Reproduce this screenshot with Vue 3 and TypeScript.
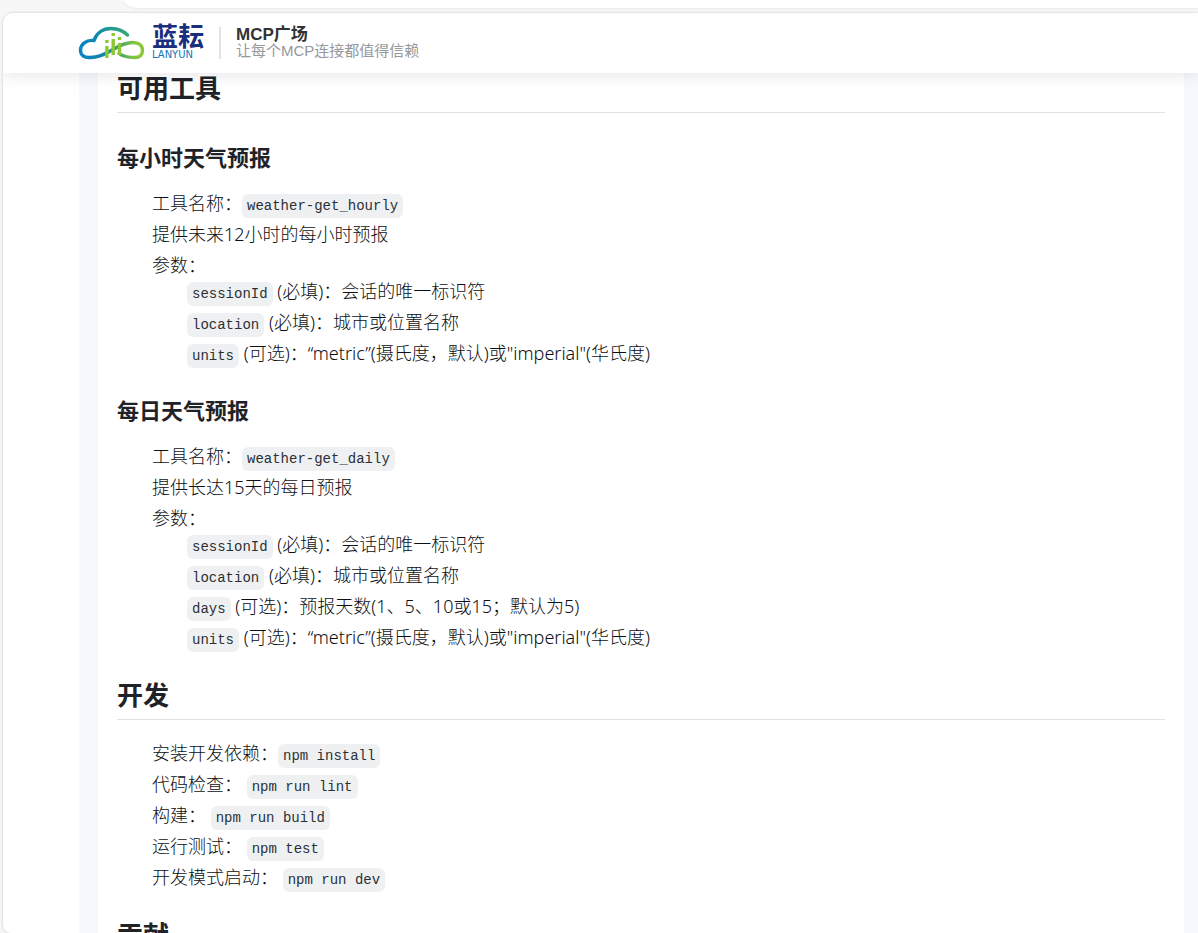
<script setup lang="ts">
interface Param {
  name: string
  text: string
}

interface Tool {
  title: string
  id: string
  summary: string
  params: Param[]
}

interface Command {
  label: string
  code: string
}

const sessionParam: Param = { name: 'sessionId', text: '(必填)：会话的唯一标识符' }
const locationParam: Param = { name: 'location', text: '(必填)：城市或位置名称' }
const unitsParam: Param = { name: 'units', text: '(可选)：“metric”(摄氏度，默认)或"imperial"(华氏度)' }

const tools: Tool[] = [
  {
    title: '每小时天气预报',
    id: 'weather-get_hourly',
    summary: '提供未来12小时的每小时预报',
    params: [sessionParam, locationParam, unitsParam],
  },
  {
    title: '每日天气预报',
    id: 'weather-get_daily',
    summary: '提供长达15天的每日预报',
    params: [
      sessionParam,
      locationParam,
      { name: 'days', text: '(可选)：预报天数(1、5、10或15；默认为5)' },
      unitsParam,
    ],
  },
]

const commands: Command[] = [
  { label: '安装开发依赖：', code: 'npm install' },
  { label: '代码检查：\u00a0', code: 'npm run lint' },
  { label: '构建：\u00a0', code: 'npm run build' },
  { label: '运行测试：\u00a0', code: 'npm test' },
  { label: '开发模式启动：\u00a0', code: 'npm run dev' },
]
</script>

<template>
  <div class="shell">
    <div class="toolbar"></div>
    <div class="window">
      <header class="header">
        <div class="brand">
          <svg class="cloud" viewBox="0 0 67 34" aria-hidden="true">
            <defs>
              <linearGradient id="cloudTop" gradientUnits="userSpaceOnUse" x1="2" y1="26" x2="50" y2="8">
                <stop offset="0" stop-color="#0785c6" />
                <stop offset="0.35" stop-color="#0a86b4" />
                <stop offset="1" stop-color="#35a878" />
              </linearGradient>
              <linearGradient id="cloudLoop" gradientUnits="userSpaceOnUse" x1="2" y1="0" x2="66" y2="0">
                <stop offset="0" stop-color="#0785c6" />
                <stop offset="0.35" stop-color="#0d87a8" />
                <stop offset="0.6" stop-color="#3fa570" />
                <stop offset="0.85" stop-color="#85c441" />
                <stop offset="1" stop-color="#8cc832" />
              </linearGradient>
            </defs>
            <path
              d="M49.500 9C45 4.500 39 2.500 33 2.500C25 2.500 18.500 7 16 14.500C8 13.500 2.500 18.500 2.500 24C2.500 29.500 6.500 31.500 11 31.500"
              fill="none" stroke="url(#cloudTop)" stroke-width="3.400" stroke-linecap="round"
            />
            <path
              d="M11 31.500C19 32 27 28.500 35 23.500C43 18.500 49 16.500 55 16.500C61 16.500 64.500 19.500 64.500 24.500C64.500 29 61.500 31.500 57 31.500C51 31.500 45 30.500 41 27.500"
              fill="none" stroke="url(#cloudLoop)" stroke-width="3.400" stroke-linecap="round"
            />
            <g fill="#8cc832">
              <path d="M27.200 14h3.400v3h-3.400zM27.200 20h3.400v12h-3.400zM33.500 7h3.400v3h-3.400zM33.500 13h3.400v16h-3.400zM39.800 11h3.400v3h-3.400zM39.800 17h3.400v12h-3.400z" />
            </g>
          </svg>
          <div class="wordmark">
            <span class="wordmark-cn">蓝耘</span>
            <span class="wordmark-en">LANYUN</span>
          </div>
        </div>
        <div class="tagline">
          <div class="tagline-title">MCP广场</div>
          <div class="tagline-sub">让每个MCP连接都值得信赖</div>
        </div>
      </header>

      <div class="page">
        <main class="doc">
          <h2>可用工具</h2>
          <section v-for="tool in tools" :key="tool.id">
            <h3>{{ tool.title }}</h3>
            <ul>
              <li>工具名称：<code>{{ tool.id }}</code></li>
              <li>{{ tool.summary }}</li>
              <li>
                参数：
                <ul>
                  <li v-for="param in tool.params" :key="param.name">
                    <code>{{ param.name }}</code> {{ param.text }}
                  </li>
                </ul>
              </li>
            </ul>
          </section>

          <h2>开发</h2>
          <ul>
            <li v-for="cmd in commands" :key="cmd.code">{{ cmd.label }}<code>{{ cmd.code }}</code></li>
          </ul>

          <h2>贡献</h2>
        </main>
      </div>
    </div>
  </div>
</template>

<style>
body {
  margin: 0;
  background: #f7f7f7;
}
</style>

<style scoped>
.shell {
  display: flex;
  flex-direction: column;
  height: 100vh;
  overflow: hidden;
  background: #f7f7f7;
  color: #1f2328;
  font-family: "Noto Sans", "Noto Sans CJK SC", sans-serif;
}

.toolbar {
  flex: none;
  height: 8px;
  margin: 0 0 5px 124px;
  background: #fff;
  border-bottom-left-radius: 16px 8px;
  box-shadow: 0 1px 2px rgba(0, 0, 0, 0.06);
}

.window {
  flex: 1;
  min-height: 0;
  display: flex;
  flex-direction: column;
  margin-left: 3px;
  overflow: hidden;
  background: #fff;
  border-radius: 10px 0 0 8px;
  box-shadow: 0 0 3px rgba(0, 0, 0, 0.2);
}

.header {
  position: relative;
  z-index: 1;
  flex: none;
  display: flex;
  align-items: center;
  height: 60px;
  padding-left: 75px;
  background: #fff;
  box-shadow: 0 2px 16px rgba(0, 0, 0, 0.1);
}

.brand {
  display: flex;
  align-items: center;
  gap: 7px;
  padding-right: 14px;
}

.cloud {
  width: 67px;
  height: 34px;
}

.wordmark {
  display: flex;
  flex-direction: column;
  width: 53px;
}

.wordmark-cn {
  color: #1b2e7d;
  font-size: 26px;
  font-weight: 700;
  line-height: 24px;
  white-space: nowrap;
}

.wordmark-en {
  color: #1676b8;
  font-family: "DejaVu Sans", sans-serif;
  font-size: 10px;
  line-height: 14px;
}

.tagline {
  padding-left: 15px;
  border-left: 2px solid #e2e3e9;
  font-family: "Liberation Sans", "Noto Sans CJK SC", sans-serif;
}

.tagline-title {
  color: #333;
  font-size: 17px;
  font-weight: 700;
  line-height: 16px;
}

.tagline-sub {
  color: #96989c;
  font-size: 15px;
  line-height: 16px;
}

.page {
  flex: 1;
  min-height: 0;
  margin-left: 76px;
  padding: 0 14px 0 19px;
  overflow: hidden;
  background: #f7f8fd;
}

.doc {
  min-height: 100%;
  padding: 0 19px;
  background: #fff;
}

h2,
h3 {
  margin: 0;
  font-weight: 700;
}

h2 {
  margin: 30px 0 20px;
  padding-bottom: 9px;
  border-bottom: 1px solid #dee1e5;
  font-size: 26px;
  line-height: 30px;
}

h2:first-child {
  margin-top: 0;
}

h3 {
  margin: 30px 0 19px;
  font-size: 22px;
  line-height: 28px;
}

ul {
  margin: 0;
  padding-left: 35px;
  list-style: none;
  color: #0c0f13;
  font-size: 18px;
  font-weight: 300;
  line-height: 26px;
}

li + li {
  margin-top: 5px;
}

code {
  padding: 4px 5px;
  border-radius: 6px;
  background: #eff0f2;
  color: #2b3036;
  font-family: "Liberation Mono", monospace;
  font-size: 14px;
  font-weight: 400;
  line-height: 16px;
}
</style>
